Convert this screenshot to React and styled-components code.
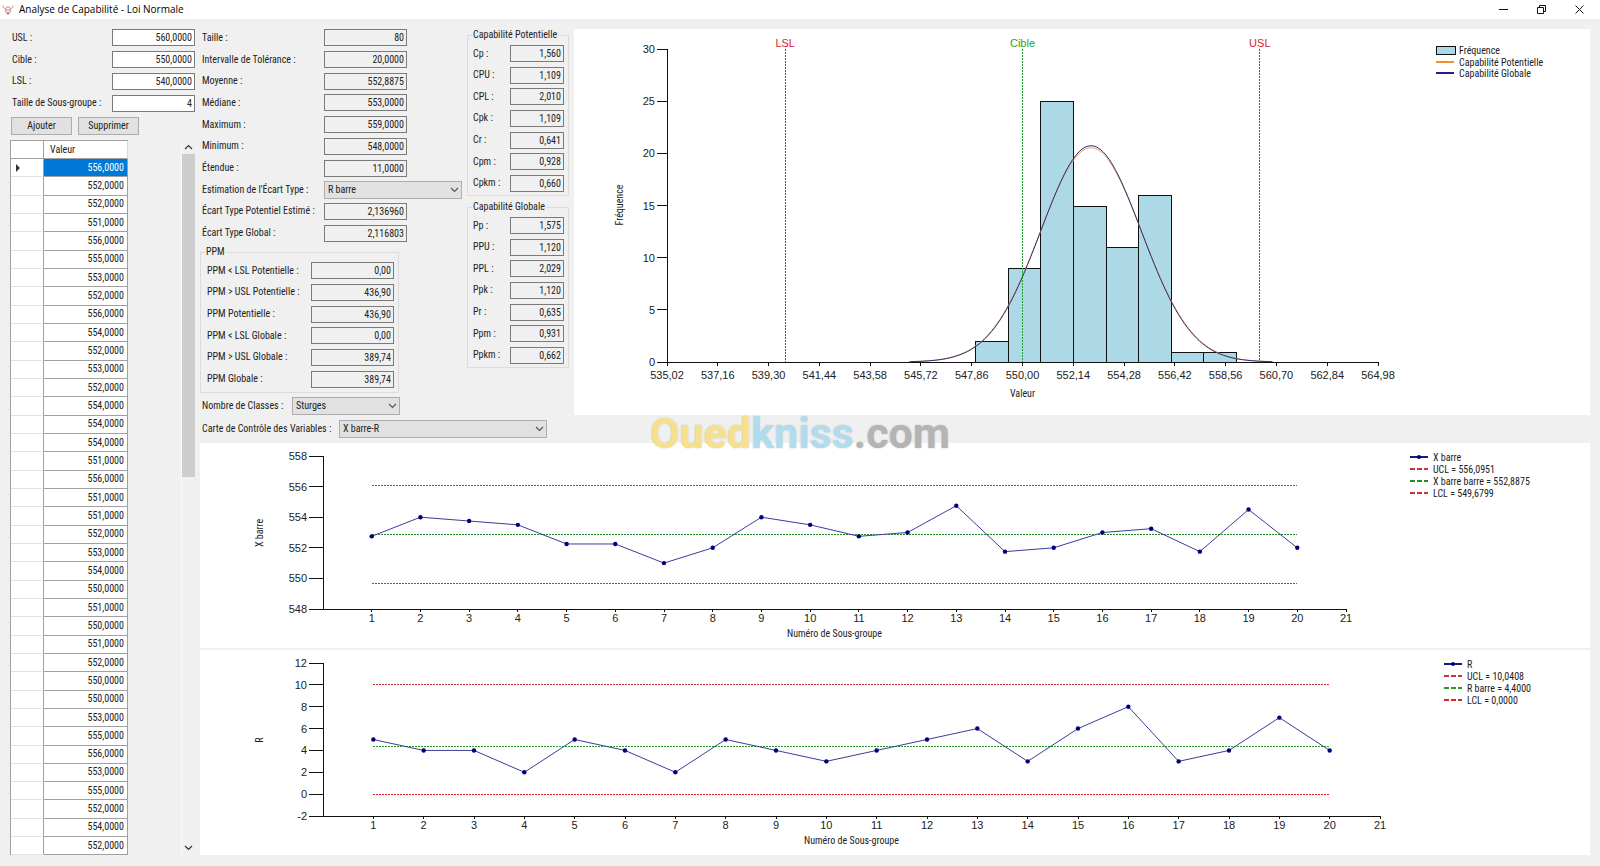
import React, { useId, useLayoutEffect, useRef, useState } from 'react';
import styled, { createGlobalStyle } from 'styled-components';

const UI_FONT = "'Roboto Condensed', 'Open Sans Condensed', Roboto, sans-serif";
const AXIS_FONT = "'Liberation Sans', sans-serif";

const GlobalStyle = createGlobalStyle`
  *, *::before, *::after { box-sizing: border-box; }
  body {
    margin: 0;
    background: #f0f0f0;
    color: #222;
    font-family: ${UI_FONT};
    font-size: 10px;
    line-height: 14px;
  }
  button, input, select { font: inherit; color: inherit; }
`;

/* ---------- data ---------- */

const VALUES = [
  556, 552, 552, 551, 556, 555, 553, 552, 556, 554, 552, 553, 552, 554, 554, 554,
  551, 556, 551, 551, 552, 553, 554, 550, 551, 550, 551, 552, 550, 550, 553, 555,
  556, 553, 555, 552, 554, 552,
];

const STATS = [
  ['Taille :', '80'],
  ['Intervalle de Tolérance :', '20,0000'],
  ['Moyenne :', '552,8875'],
  ['Médiane :', '553,0000'],
  ['Maximum :', '559,0000'],
  ['Minimum :', '548,0000'],
  ['Étendue :', '11,0000'],
];

const PPM = [
  ['PPM < LSL Potentielle :', '0,00'],
  ['PPM > USL Potentielle :', '436,90'],
  ['PPM Potentielle :', '436,90'],
  ['PPM < LSL Globale :', '0,00'],
  ['PPM > USL Globale :', '389,74'],
  ['PPM Globale :', '389,74'],
];

const POTENTIAL = [
  ['Cp :', '1,560'], ['CPU :', '1,109'], ['CPL :', '2,010'], ['Cpk :', '1,109'],
  ['Cr :', '0,641'], ['Cpm :', '0,928'], ['Cpkm :', '0,660'],
];

const OVERALL = [
  ['Pp :', '1,575'], ['PPU :', '1,120'], ['PPL :', '2,029'], ['Ppk :', '1,120'],
  ['Pr :', '0,635'], ['Ppm :', '0,931'], ['Ppkm :', '0,662'],
];

const MEAN = 552.8875;
const BIN_START = 548;
const BIN_WIDTH = 1.375;
const BINS = [2, 9, 25, 15, 11, 16, 1, 1];

const X_BARRE = {
  label: 'X barre',
  rightMargin: 244,
  legendRight: 180,
  ticks: [548, 550, 552, 554, 556, 558],
  points: [
    552.75, 554, 553.75, 553.5, 552.25, 552.25, 551, 552, 554, 553.5,
    552.75, 553, 554.75, 551.75, 552, 553, 553.25, 551.75, 554.5, 552,
  ],
  limits: [
    { text: 'UCL = 556,0951', value: 556.0951, color: '#c8323a' },
    { text: 'X barre barre = 552,8875', value: 552.8875, color: '#228b22' },
    { text: 'LCL = 549,6799', value: 549.6799, color: '#c8323a' },
  ],
};

const RANGE = {
  label: 'R',
  rightMargin: 210,
  legendRight: 146,
  ticks: [-2, 0, 2, 4, 6, 8, 10, 12],
  points: [5, 4, 4, 2, 5, 4, 2, 5, 4, 3, 4, 5, 6, 3, 6, 8, 3, 4, 7, 4],
  limits: [
    { text: 'UCL = 10,0408', value: 10.0408, color: '#c8323a' },
    { text: 'R barre = 4,4000', value: 4.4, color: '#2a9a2a' },
    { text: 'LCL = 0,0000', value: 0, color: '#dc2030' },
  ],
};

/* ---------- window frame ---------- */

const Window = styled.div`
  display: flex;
  flex-direction: column;
  min-height: 100vh;
  min-width: 1100px;
  position: relative;
`;

const TitleBar = styled.header`
  display: flex;
  align-items: center;
  height: 19px;
  padding: 0 2px;
  background: #fff;
`;

const Title = styled.h1`
  flex: 1;
  margin: 0 0 0 5px;
  font: 400 10px/19px 'Open Sans', sans-serif;
  color: #000;
`;

const WindowButton = styled.button`
  display: grid;
  place-items: center;
  width: 38px;
  height: 19px;
  padding: 0;
  border: 0;
  background: transparent;
`;

const Body = styled.main`
  flex: 1;
  display: flex;
  gap: 5px;
  padding: 8px 10px 11px;
`;

const Sidebar = styled.aside`
  display: flex;
  flex-direction: column;
  width: 185px;
`;

const Content = styled.div`
  flex: 1;
  min-width: 0;
  display: flex;
  flex-direction: column;
`;

const TopArea = styled.div`
  display: flex;
  height: 388px;
`;

const Parameters = styled.section`
  width: 267px;
`;

const Indices = styled.section`
  display: flex;
  flex-direction: column;
  gap: 4px;
  width: 102px;
  padding-top: 1px;
  margin-right: 5px;
`;

/* ---------- fields ---------- */

const FieldList = styled.div`
  display: grid;
  grid-auto-rows: 1fr;
  height: ${(p) => p.$height}px;
  padding-left: ${(p) => p.$indent || 0}px;
`;

const FieldRow = styled.div`
  display: flex;
  align-items: center;
`;

const FieldLabel = styled.label`
  width: ${(p) => (p.$width ? `${p.$width}px` : 'auto')};
  white-space: nowrap;
`;

const TextBox = styled.input`
  width: ${(p) => p.$width}px;
  height: 17px;
  padding: 0 2px;
  border: 1px solid #7a7a7a;
  border-radius: 0;
  background: ${(p) => (p.readOnly ? '#f0f0f0' : '#fff')};
  text-align: right;
  outline: 0;
`;

const ComboFrame = styled.span`
  display: grid;
  align-items: center;
  width: ${(p) => p.$width}px;
  height: 18px;

  > * { grid-area: 1 / 1; }
  > svg { justify-self: end; margin-right: 3px; pointer-events: none; }
`;

const Combo = styled.select`
  width: 100%;
  height: 18px;
  padding: 0 3px;
  border: 1px solid #adadad;
  border-radius: 0;
  background: #e1e1e1;
  appearance: none;
`;

const Group = styled.fieldset`
  width: ${(p) => p.$width}px;
  min-width: 0;
  margin: ${(p) => p.$top || 0}px 0 0;
  padding: 1px 0 ${(p) => p.$bottom}px 5px;
  border: 1px solid #dcdcdc;
`;

const GroupTitle = styled.legend`
  height: 14px;
  margin-left: -1px;
  padding: 0 1px;
  white-space: nowrap;
`;

const ClassesRow = styled(FieldRow)`
  margin-top: 4px;
  padding-left: 2px;
`;

const ChartTypeRow = styled(FieldRow)`
  padding-left: 2px;
  margin: 5px 0;
`;

const ButtonRow = styled.div`
  display: flex;
  gap: 6px;
  margin: 3px 0 5px 1px;
`;

const PushButton = styled.button`
  width: 61px;
  height: 18px;
  padding: 0;
  border: 1px solid #adadad;
  background: #e1e1e1;
`;

/* ---------- value grid ---------- */

const GridArea = styled.div`
  flex: 1 1 0;
  min-height: 0;
  display: flex;
  justify-content: space-between;
  overflow: hidden;
`;

const ValueTable = styled.table`
  width: 118px;
  height: 734px;
  border-collapse: separate;
  border-spacing: 0;
  table-layout: fixed;
  border-left: 1px solid #a0a0a0;
  border-top: 1px solid #a0a0a0;
  background: #fff;
`;

const MarkerHead = styled.th`
  width: 33px;
  height: 18px;
  padding: 0;
  border-right: 1px solid #a0a0a0;
  border-bottom: 1px solid #a0a0a0;
`;

const ValueHead = styled.th`
  padding: 0 6px;
  border-right: 1px solid #d8d8d8;
  border-bottom: 1px solid #a0a0a0;
  font-weight: 400;
  text-align: left;
`;

const MarkerCell = styled.td`
  padding: 0 0 0 5px;
  border-right: 1px solid #a0a0a0;
  border-bottom: 1px solid #e2e2e2;
  line-height: 0;
`;

const ValueCell = styled.td`
  height: 15px;
  padding: 0 3px;
  border-right: 1px solid #a0a0a0;
  border-bottom: 1px solid #a0a0a0;
  background: ${(p) => (p.$selected ? '#0078d7' : '#fff')};
  color: ${(p) => (p.$selected ? '#fff' : 'inherit')};
  text-align: right;
`;

const ScrollBar = styled.div`
  display: flex;
  flex-direction: column;
  width: 14px;
  border-left: 1px solid #f8f8f8;
`;

const ScrollButton = styled.button`
  display: grid;
  place-items: center;
  height: 14px;
  padding: 0;
  border: 0;
  background: transparent;
`;

const ScrollTrack = styled.div`
  flex: 1;
`;

const ScrollThumb = styled.div`
  height: 47%;
  background: #cdcdcd;
`;

/* ---------- charts ---------- */

const ChartPanel = styled.figure`
  flex: 1 1 0;
  min-width: 0;
  min-height: ${(p) => p.$minHeight}px;
  margin: ${(p) => p.$top || 0}px 0 0;
  background: #fff;
  overflow: hidden;
`;

const Drawing = styled.svg`
  display: block;
  fill: #222;

  .axis { stroke: #111; stroke-width: 1; shape-rendering: crispEdges; fill: none; }
  .tick { font: 11px ${AXIS_FONT}; }
  .middle { text-anchor: middle; }
  .end { text-anchor: end; }
`;

const Watermark = styled.div`
  position: absolute;
  top: 405px;
  left: 50%;
  transform: translateX(-50%);
  font: 700 43px/56px Roboto, sans-serif;
  color: #b4b4b4;
  pointer-events: none;
  text-shadow: 0 0 2px #c8c8c8;
`;

const WatermarkPart = styled.span`
  color: ${(p) => p.$color};
`;

function Chevron({ up, stroke = '#555' }) {
  return (
    <svg width="9" height="6" viewBox="0 0 9 6" fill="none" stroke={stroke} strokeWidth="1.2">
      <path d={up ? 'M1 5 4.5 1.5 8 5' : 'M1 1 4.5 4.5 8 1'} />
    </svg>
  );
}

function Field({ label, value, labelWidth, width, editable }) {
  const id = useId();
  return (
    <FieldRow>
      <FieldLabel htmlFor={id} $width={labelWidth}>{label}</FieldLabel>
      <TextBox id={id} defaultValue={value} readOnly={!editable} $width={width} />
    </FieldRow>
  );
}

function ComboField({ as: Row = FieldRow, label, value, labelWidth, width }) {
  const id = useId();
  return (
    <Row>
      <FieldLabel htmlFor={id} $width={labelWidth}>{label}</FieldLabel>
      <ComboFrame $width={width}>
        <Combo id={id} defaultValue={value}>
          <option>{value}</option>
        </Combo>
        <Chevron />
      </ComboFrame>
    </Row>
  );
}

function IndexGroup({ title, rows }) {
  return (
    <Group $width={102} $bottom={1}>
      <GroupTitle>{title}</GroupTitle>
      <FieldList $height={151}>
        {rows.map(([label, value]) => (
          <Field key={label} label={label} value={value} labelWidth={37} width={54} />
        ))}
      </FieldList>
    </Group>
  );
}

function useSize() {
  const ref = useRef(null);
  const [size, setSize] = useState({ width: 0, height: 0 });
  useLayoutEffect(() => {
    const measure = () => {
      const box = ref.current.getBoundingClientRect();
      setSize({ width: Math.floor(box.width), height: Math.floor(box.height) });
    };
    measure();
    const observer = new ResizeObserver(measure);
    observer.observe(ref.current);
    return () => observer.disconnect();
  }, []);
  return [ref, size];
}

const scale = (d0, d1, r0, r1) => (v) => r0 + ((v - d0) / (d1 - d0)) * (r1 - r0);
const decimal = (v) => v.toFixed(2).replace('.', ',');

function bellCurve(sigma, x, y) {
  const steps = 120;
  const reach = 3.6 * sigma;
  const points = [];
  for (let i = 0; i <= steps; i += 1) {
    const v = MEAN - reach + (2 * reach * i) / steps;
    const density = Math.exp(-((v - MEAN) ** 2) / (2 * sigma * sigma)) / (sigma * Math.sqrt(2 * Math.PI));
    points.push(`${x(v)},${y(density * 80 * BIN_WIDTH)}`);
  }
  return points.join(' ');
}

function Histogram() {
  const [ref, { width, height }] = useSize();
  const left = 93;
  const right = width - 212;
  const bottom = height - 53;
  const x = scale(535.02, 564.98, left, right);
  const y = scale(0, 30, bottom, 20);
  const legend = width - 154;
  const limits = [
    { text: 'LSL', value: 540, color: '#dc2030' },
    { text: 'Cible', value: 550, color: '#1fa02f' },
    { text: 'USL', value: 560, color: '#dc2030' },
  ];
  return (
    <ChartPanel ref={ref} $minHeight={386} $top={2}>
      {width > 0 && (
        <Drawing width={width} height={height} role="img" aria-label="Fréquence">
          {BINS.map((count, i) => {
            const x0 = Math.round(x(BIN_START + i * BIN_WIDTH));
            const x1 = Math.round(x(BIN_START + (i + 1) * BIN_WIDTH));
            const top = Math.round(y(count));
            return (
              <rect key={i} x={x0} y={top} width={x1 - x0} height={bottom - top}
                fill="#add8e6" stroke="#111" shapeRendering="crispEdges" />
            );
          })}
          <polyline points={bellCurve(2.13696, x, y)} fill="none" stroke="#f0a070" />
          <polyline points={bellCurve(2.116803, x, y)} fill="none" stroke="#2c2c70" />
          <path className="axis" d={`M${left} 20V${bottom + 4}M${left - 10} ${bottom}H${right}`} />
          {[0, 5, 10, 15, 20, 25, 30].map((v) => (
            <g key={v}>
              <path className="axis" d={`M${left - 10} ${y(v)}h10`} />
              <text className="tick end" x={left - 12} y={y(v) + 4}>{v}</text>
            </g>
          ))}
          {Array.from({ length: 15 }, (_, i) => 535.02 + i * 2.14).map((v) => (
            <g key={v}>
              <path className="axis" d={`M${x(v)} ${bottom}v4`} />
              <text className="tick middle" x={x(v)} y={bottom + 17}>{decimal(v)}</text>
            </g>
          ))}
          {limits.map((l) => (
            <g key={l.text}>
              <path d={`M${x(l.value)} 20V${bottom}`} stroke={l.color} strokeDasharray="2 1" shapeRendering="crispEdges" />
              <text className="tick middle" x={x(l.value)} y="18" fill={l.color}>{l.text}</text>
            </g>
          ))}
          <text className="middle" x={(left + right) / 2} y={bottom + 35}>Valeur</text>
          <text className="middle" transform={`translate(49 ${height / 2 - 17}) rotate(-90)`}>Fréquence</text>
          <rect x={legend} y="17" width="19" height="8" fill="#add8e6" stroke="#111" shapeRendering="crispEdges" />
          <path d={`M${legend} 33h18`} stroke="#f09030" strokeWidth="2" />
          <path d={`M${legend} 44h18`} stroke="#202088" strokeWidth="2" />
          <text x={legend + 23} y="25">Fréquence</text>
          <text x={legend + 23} y="37">Capabilité Potentielle</text>
          <text x={legend + 23} y="48">Capabilité Globale</text>
        </Drawing>
      )}
    </ChartPanel>
  );
}

function ControlChart({ chart, top }) {
  const [ref, { width, height }] = useSize();
  const { ticks, points, limits, label, rightMargin, legendRight } = chart;
  const left = 123;
  const right = width - rightMargin;
  const bottom = height - 39;
  const x = scale(0, 21, left, right);
  const y = scale(ticks[0], ticks[ticks.length - 1], bottom, 13);
  const legend = width - legendRight;
  return (
    <ChartPanel ref={ref} $minHeight={205} $top={top}>
      {width > 0 && (
        <Drawing width={width} height={height} role="img" aria-label={label}>
          <path className="axis" d={`M${left} 13V${bottom}H${right}`} />
          {ticks.map((v) => (
            <g key={v}>
              <path className="axis" d={`M${left - 14} ${y(v)}h14`} />
              <text className="tick end" x={left - 16} y={y(v) + 4}>{v}</text>
            </g>
          ))}
          {Array.from({ length: 21 }, (_, i) => i + 1).map((v) => (
            <g key={v}>
              <path className="axis" d={`M${x(v)} ${bottom}v3`} />
              <text className="tick middle" x={x(v)} y={bottom + 13}>{v}</text>
            </g>
          ))}
          {limits.map((l, i) => (
            <g key={l.text}>
              <path d={`M${x(1)} ${y(l.value)}H${x(20)}`} stroke={l.color} strokeDasharray="2 1" shapeRendering="crispEdges" />
              <path d={`M${legend} ${26 + i * 12}h18`} stroke={l.color} strokeWidth="2" strokeDasharray="5 2" />
              <text x={legend + 23} y={30 + i * 12}>{l.text}</text>
            </g>
          ))}
          <polyline points={points.map((v, i) => `${x(i + 1)},${y(v)}`).join(' ')} fill="none" stroke="#3c3c9c" />
          {points.map((v, i) => (
            <circle key={i} cx={x(i + 1)} cy={y(v)} r="2.2" fill="#00007c" />
          ))}
          <path d={`M${legend} 14h18`} stroke="#181880" strokeWidth="2" />
          <circle cx={legend + 9} cy="14" r="2" fill="#00007c" />
          <text x={legend + 23} y="18">{label}</text>
          <text className="middle" x={(left + right) / 2} y={bottom + 28}>Numéro de Sous-groupe</text>
          <text className="middle" transform={`translate(63 ${(14 + bottom) / 2}) rotate(-90)`}>{label}</text>
        </Drawing>
      )}
    </ChartPanel>
  );
}

function AppIcon() {
  return (
    <svg width="12" height="12" viewBox="0 0 12 12" fill="none" stroke="#d08c8c" strokeWidth="1">
      <path d="M1 1.500C1 4 2 4.500 3.500 4.500M11 1.500C11 4 10 4.500 8.500 4.500" />
      <path d="M3.500 4C4.500 2.500 7.500 2.500 8.500 4L8 8.500C7.500 10.800 4.500 10.800 4 8.500Z" fill="#faeaea" />
      <path d="M4.500 6h1M6.500 6h1M5 9h2" stroke="#b84848" />
    </svg>
  );
}

export default function App() {
  return (
    <>
      <GlobalStyle />
      <Window>
        <TitleBar>
          <AppIcon />
          <Title>Analyse de Capabilité - Loi Normale</Title>
          <WindowButton aria-label="Réduire">
            <svg width="9" height="9" stroke="#111" fill="none"><path d="M0 4.500h9" /></svg>
          </WindowButton>
          <WindowButton aria-label="Restaurer">
            <svg width="9" height="9" stroke="#111" fill="none">
              <path d="M.5 2.500h6v6h-6zM2.500 2.500v-2h6v6h-2" />
            </svg>
          </WindowButton>
          <WindowButton aria-label="Fermer">
            <svg width="9" height="9" stroke="#111" fill="none"><path d="M.5.5l8 8M8.500.5l-8 8" /></svg>
          </WindowButton>
        </TitleBar>

        <Body>
          <Sidebar>
            <FieldList $height={87} $indent={2}>
              <Field label="USL :" value="560,0000" labelWidth={100} width={83} editable />
              <Field label="Cible :" value="550,0000" labelWidth={100} width={83} editable />
              <Field label="LSL :" value="540,0000" labelWidth={100} width={83} editable />
              <Field label="Taille de Sous-groupe :" value="4" labelWidth={100} width={83} editable />
            </FieldList>
            <ButtonRow>
              <PushButton>Ajouter</PushButton>
              <PushButton>Supprimer</PushButton>
            </ButtonRow>
            <GridArea>
              <ValueTable>
                <thead>
                  <tr>
                    <MarkerHead aria-label="Ligne" />
                    <ValueHead scope="col">Valeur</ValueHead>
                  </tr>
                </thead>
                <tbody>
                  {VALUES.map((v, i) => (
                    <tr key={i}>
                      <MarkerCell>
                        {i === 0 && (
                          <svg width="5" height="8" fill="#333"><path d="M0 0 4 4 0 8z" /></svg>
                        )}
                      </MarkerCell>
                      <ValueCell $selected={i === 0}>{`${v},0000`}</ValueCell>
                    </tr>
                  ))}
                  <tr>
                    <MarkerCell />
                    <ValueCell />
                  </tr>
                </tbody>
              </ValueTable>
              <ScrollBar>
                <ScrollButton aria-label="Défiler vers le haut"><Chevron up stroke="#333" /></ScrollButton>
                <ScrollTrack><ScrollThumb /></ScrollTrack>
                <ScrollButton aria-label="Défiler vers le bas"><Chevron stroke="#333" /></ScrollButton>
              </ScrollBar>
            </GridArea>
          </Sidebar>

          <Content>
            <TopArea>
              <Parameters>
                <FieldList $height={217} $indent={2}>
                  {STATS.map(([label, value]) => (
                    <Field key={label} label={label} value={value} labelWidth={122} width={83} />
                  ))}
                  <ComboField label="Estimation de l'Écart Type :" value="R barre" labelWidth={122} width={138} />
                  <Field label="Écart Type Potentiel Estimé :" value="2,136960" labelWidth={122} width={83} />
                  <Field label="Écart Type Global :" value="2,116803" labelWidth={122} width={83} />
                </FieldList>
                <Group $width={199} $top={1} $bottom={2}>
                  <GroupTitle>PPM</GroupTitle>
                  <FieldList $height={130} $indent={1}>
                    {PPM.map(([label, value]) => (
                      <Field key={label} label={label} value={value} labelWidth={104} width={83} />
                    ))}
                  </FieldList>
                </Group>
                <ComboField as={ClassesRow} label="Nombre de Classes :" value="Sturges" labelWidth={90} width={108} />
              </Parameters>
              <Indices>
                <IndexGroup title="Capabilité Potentielle" rows={POTENTIAL} />
                <IndexGroup title="Capabilité Globale" rows={OVERALL} />
              </Indices>
              <Histogram />
            </TopArea>
            <ComboField as={ChartTypeRow} label="Carte de Contrôle des Variables :" value="X barre-R" labelWidth={137} width={208} />
            <ControlChart chart={X_BARRE} />
            <ControlChart chart={RANGE} top={2} />
          </Content>
        </Body>

        <Watermark>
          <WatermarkPart $color="#f7e08c">Oued</WatermarkPart>
          <WatermarkPart $color="#b0dcee">kniss</WatermarkPart>
          .com
        </Watermark>
      </Window>
    </>
  );
}
